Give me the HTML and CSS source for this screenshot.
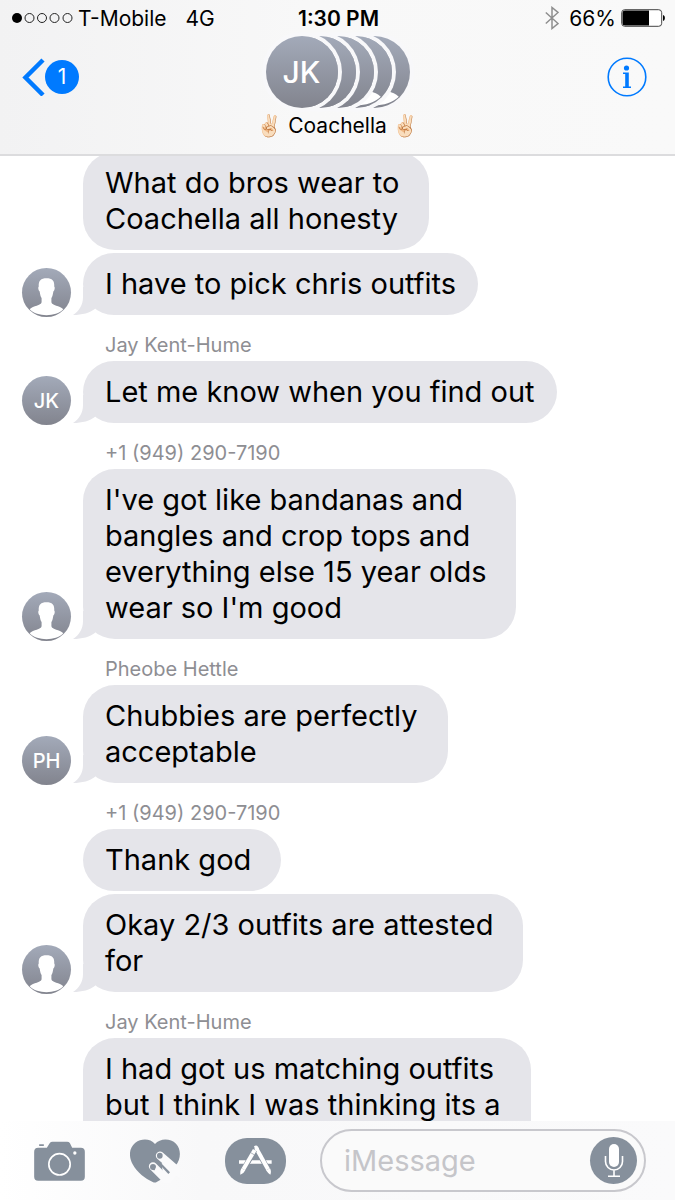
FILE: index.html
```html
<!DOCTYPE html>
<html lang="en">

<head>
    <meta charset="UTF-8">
    <meta name="viewport" content="width=device-width, initial-scale=1.0">
    <title>Coachella</title>
    <link rel="stylesheet" href="styles.css">
</head>

<body>
    <!-- shared contact silhouette -->
    <svg class="defs" aria-hidden="true">
        <symbol id="person" viewBox="0 0 48 48">
            <path fill="#fff" d="M24 10c5.500 0 8 2.500 7.600 8 1 1 .3 4-.9 5-.4 3-1 5-1.900 6.500v4c.7 3.500 8 3 11.700 7C36.500 44.500 30.500 46.200 24 46.200s-12.500-1.700-16.500-5.700c3.700-4 11-3.500 11.700-7v-4c-.9-1.500-1.500-3.500-1.900-6.500-1.200-1-1.900-4-.9-5C16 12.500 18.500 10 24 10z" />
        </symbol>
    </svg>

    <header class="header">
        <div class="status">
            <div class="status-left">
                <svg width="61" height="12" viewBox="0 0 61 12" aria-hidden="true">
                    <circle cx="5" cy="6" r="5" />
                    <g fill="none" stroke="#222">
                        <circle cx="17.500" cy="6" r="4.500" />
                        <circle cx="30" cy="6" r="4.500" />
                        <circle cx="42.500" cy="6" r="4.500" />
                        <circle cx="55.500" cy="6" r="4.500" />
                    </g>
                </svg>
                <span class="carrier">T-Mobile</span>
                <span>4G</span>
            </div>
            <div class="time">1:30 PM</div>
            <div class="status-right">
                <svg width="14" height="24" viewBox="0 0 14 24" fill="none" stroke="#8e8e8e" stroke-width="1.500" aria-hidden="true">
                    <path d="M.8 6.500L13 17.500 7 22.500V1.500L13 6.500.8 17.500" />
                </svg>
                <span>66%</span>
                <svg width="44" height="18" viewBox="0 0 44 18" aria-hidden="true">
                    <rect x=".7" y=".7" width="40" height="16.600" rx="3" fill="#fff" stroke="#444" />
                    <path d="M4 1.500h24v15H4a2.500 2.500 0 0 1-2.500-2.500V4A2.500 2.500 0 0 1 4 1.500z" />
                    <path d="M42 6c2.500.5 2.500 5.500 0 6z" />
                </svg>
            </div>
        </div>

        <nav class="nav">
            <a class="back" href="#" aria-label="Back">
                <svg width="24" height="38" viewBox="0 0 24 38" fill="none" stroke="#007aff" stroke-width="4.500" aria-hidden="true">
                    <path d="M22 2L4.500 19.500 22 37" />
                </svg>
                <span class="unread">1</span>
            </a>
            <div class="group">
                <div class="stack">
                    <span class="avatar big">JK</span>
                    <span class="avatar big"></span>
                    <span class="avatar big"></span>
                    <span class="avatar big"><svg><use href="#person" /></svg></span>
                    <span class="avatar big"><svg><use href="#person" /></svg></span>
                </div>
                <h1 class="title"><span class="emoji">✌🏻</span> Coachella <span class="emoji">✌🏻</span></h1>
            </div>
            <button class="info" aria-label="Info">
                <svg width="40" height="40" viewBox="0 0 40 40" aria-hidden="true">
                    <circle cx="20" cy="20" r="18.800" fill="none" stroke="#007aff" stroke-width="1.600" />
                    <circle cx="19.500" cy="11" r="2.600" fill="#007aff" />
                    <path fill="#007aff" d="M16 15.500h5.800v14h2.200V31h-8v-1.500h2.200V17H16z" />
                </svg>
            </button>
        </nav>
    </header>

    <main class="chat">
        <section class="messages">
            <div class="message">
                <p class="bubble">What do bros wear to<br>Coachella all honesty</p>
            </div>
            <div class="message">
                <span class="avatar"><svg><use href="#person" /></svg></span>
                <p class="bubble tail snug">I have to pick chris outfits</p>
            </div>

            <h2 class="sender">Jay Kent-Hume</h2>
            <div class="message">
                <span class="avatar">JK</span>
                <p class="bubble tail snug">Let me know when you find out</p>
            </div>

            <h2 class="sender">+1 (949) 290-7190</h2>
            <div class="message">
                <span class="avatar"><svg><use href="#person" /></svg></span>
                <p class="bubble tail">I've got like bandanas and<br>bangles and crop tops and<br>everything else 15 year olds<br>wear so I'm good</p>
            </div>

            <h2 class="sender">Pheobe Hettle</h2>
            <div class="message">
                <span class="avatar">PH</span>
                <p class="bubble tail">Chubbies are perfectly<br>acceptable</p>
            </div>

            <h2 class="sender">+1 (949) 290-7190</h2>
            <div class="message">
                <p class="bubble">Thank god</p>
            </div>
            <div class="message">
                <span class="avatar"><svg><use href="#person" /></svg></span>
                <p class="bubble tail">Okay 2/3 outfits are attested<br>for</p>
            </div>

            <h2 class="sender">Jay Kent-Hume</h2>
            <div class="message">
                <p class="bubble continues">I had got us matching outfits<br>but I think I was thinking its a</p>
            </div>
        </section>
    </main>

    <footer class="toolbar">
        <button aria-label="Camera">
            <svg width="51" height="40" viewBox="102 90 152 120">
                <path fill="#86909c" d="M117 100h14v5h-14zM114 110h26l9-14q3-4 8-4h44q5 0 8 4l7 14h26q12 0 12 12v75q0 12-12 12H114q-12 0-12-12v-75q0-12 12-12z" />
                <circle cx="178" cy="160" r="32" fill="none" stroke="#fff" stroke-width="5" />
                <circle cx="224" cy="126" r="5" fill="#fff" />
            </svg>
        </button>
        <button aria-label="Digital Touch">
            <svg width="50" height="44" viewBox="390 88 150 132">
                <path fill="#86909c" d="M465 103C451 86 424 86 406 99c-20 16-20 44-8 65 13 25 38 43 60 53q7 3 12 0 35-17 58-50c14-18 17-47 0-65-17-17-48-17-63 1z" />
                <g fill="none" stroke="#fafafb" stroke-linecap="round">
                    <path stroke-width="25" d="M480 138l60 52" />
                    <path stroke-width="25" d="M459 170l42 42" />
                </g>
                <path fill="#fafafb" d="M485 160l45 5 10 20-30 35-20-15z" />
                <g fill="#86909c">
                    <path d="M471 138a8 8 0 1 1 17 0q0 9-9 9-8 0-8-9zM450 172a9 9 0 1 1 18 0l-4 10q-14 0-14-10z" />
                    <path d="M478 164l5-4 27 28-5 5z" />
                </g>
            </svg>
        </button>
        <button aria-label="Apps">
            <svg width="61" height="46" viewBox="675 83 183 138">
                <rect x="675" y="83" width="183" height="138" rx="66" fill="#86909c" />
                <g stroke="#fff" fill="none" stroke-width="12">
                    <path stroke-width="10" d="M717 155h98" />
                    <path stroke="#86909c" stroke-width="16" d="M766 114l-36 65M768 112l37 68" />
                    <path d="M768 112l36 65" />
                    <path stroke="#86909c" stroke-width="15" d="M764 119l-20 36" />
                    <path d="M764 119l-34 58" />
                </g>
                <path fill="#fff" d="M762 108q7-5 12 1l3 6-10 6zM724 174l12 6q-4 9-15 13-1-11 3-19zM798 180l12-6q5 9 1 19-8-5-13-13z" />
                <path stroke="#86909c" stroke-width="2" d="M752 127l12 7" />
            </svg>
        </button>
        <div class="compose">
            <input type="text" placeholder="iMessage" aria-label="iMessage">
            <button class="mic" aria-label="Dictate">
                <svg width="20" height="36" viewBox="0 0 20 36" fill="none" stroke="#fff" stroke-width="1.600">
                    <rect x="5" y="1" width="10" height="23" rx="5" fill="#fff" stroke="none" />
                    <path d="M1.500 13v5.500a8.500 8.500 0 0 0 17 0V13M10 27v6M4 33.200h12" />
                </svg>
            </button>
        </div>
    </footer>
</body>

</html>
```

FILE: styles.css
```css
* {
    box-sizing: border-box;
}

body {
    margin: 0;
    height: 100vh;
    display: flex;
    flex-direction: column;
    background: #fff;
    color: #000;
    font-family: Inter, "Liberation Sans", sans-serif;
}

button {
    display: flex;
    flex: none;
    padding: 0;
    border: none;
    background: none;
    cursor: pointer;
}

.defs {
    position: absolute;
    width: 0;
    height: 0;
}

/* header */
.header {
    flex: none;
    background: linear-gradient(to right, #f2f2f3, #f8f8f8 45%, #f9f9f9);
    border-bottom: 2px solid #dcdcde;
}

.status {
    display: grid;
    grid-template-columns: 1fr auto 1fr;
    align-items: center;
    height: 36px;
    padding: 0 10px 0 12px;
    font-size: 21px;
}

.status-left,
.status-right {
    display: flex;
    align-items: center;
    gap: 5px;
}

.status-right {
    justify-content: flex-end;
}

.status-right svg:first-child {
    margin-right: 5px;
}

.carrier {
    margin-right: 14px;
}

.time {
    font-weight: 600;
}

.nav {
    display: grid;
    grid-template-columns: 1fr auto 1fr;
    height: 118px;
    padding: 0 21px;
}

.back {
    display: flex;
    align-items: center;
    justify-self: start;
    height: 38px;
    margin-top: 22px;
    text-decoration: none;
}

.unread {
    width: 34px;
    height: 34px;
    border-radius: 50%;
    background: #007aff;
    color: #fff;
    font-size: 21px;
    line-height: 34px;
    text-align: center;
}

.info {
    justify-self: end;
    align-self: start;
    margin-top: 21px;
    margin-right: 7px;
}

.group {
    display: flex;
    flex-direction: column;
    align-items: center;
}

.stack {
    display: flex;
    isolation: isolate;
}

.title {
    margin: 4px 0 0;
    font-size: 21px;
    font-weight: 400;
    line-height: 28px;
}

.emoji {
    font-family: "Noto Color Emoji", sans-serif;
}

/* avatars */
.avatar {
    display: flex;
    flex: none;
    align-items: center;
    justify-content: center;
    width: 49px;
    height: 49px;
    border-radius: 50%;
    background: linear-gradient(#a3aab9, #82848e);
    color: #fff;
    font-size: 20px;
    font-weight: 500;
}

.avatar svg {
    width: 100%;
    height: 100%;
}

.big {
    position: relative;
    width: 72px;
    height: 72px;
    box-shadow: 0 0 0 4px #f8f8fa;
    font-size: 30px;
}

.big + .big {
    margin-left: -54px;
}

.big:nth-child(1) {
    z-index: 5;
}

.big:nth-child(2) {
    z-index: 4;
}

.big:nth-child(3) {
    z-index: 3;
}

.big:nth-child(4) {
    z-index: 2;
}

.big:nth-child(5) {
    z-index: 1;
}

/* conversation */
.chat {
    flex: 1;
    min-height: 0;
    overflow: hidden;
}

.messages {
    display: flex;
    flex-direction: column;
    gap: 3px;
    margin-top: -4px;
    padding: 0 22px;
}

.message {
    display: grid;
    grid-template-columns: 49px 1fr;
    column-gap: 12px;
    align-items: end;
}

.message .avatar {
    margin-bottom: -2px;
}

.bubble {
    position: relative;
    isolation: isolate;
    grid-column: 2;
    justify-self: start;
    margin: 0;
    padding: 13px 30px 13px 22px;
    border-radius: 32px;
    background: #e5e5ea;
    font-size: 29px;
    line-height: 36px;
}

.snug {
    padding-right: 22px;
}

/* last bubble runs on under the toolbar */
.continues {
    padding-bottom: 49px;
}

.tail::before {
    content: "";
    position: absolute;
    z-index: -1;
    left: -10px;
    bottom: 0;
    width: 34px;
    height: 28px;
    background: #e5e5ea;
    clip-path: path("M10 0V10C10 18 6 24 0 28C9 28 17 26 23 21L34 10V0Z");
}

.sender {
    margin: 0;
    padding: 15px 0 1px 83px;
    color: #8e8e93;
    font-size: 20px;
    font-weight: 400;
    line-height: 24px;
}

/* toolbar */
.toolbar {
    display: flex;
    flex: none;
    align-items: center;
    gap: 45px;
    height: 79px;
    padding: 0 29px 0 34px;
    background: linear-gradient(to right, #fff, #f8f8f9 30%, #fafafb);
}

.compose {
    display: flex;
    flex: 1;
    align-items: center;
    min-width: 0;
    height: 63px;
    margin-left: -11px;
    padding: 0 7px 0 22px;
    border: 2px solid #c8c8cd;
    border-radius: 32px;
    background: #fafafa;
}

.compose input {
    flex: 1;
    min-width: 0;
    padding: 0;
    border: none;
    outline: none;
    background: none;
    font: inherit;
    font-size: 29px;
}

.compose input::placeholder {
    color: #c5c5c9;
    opacity: 1;
}

.mic {
    align-items: center;
    justify-content: center;
    width: 47px;
    height: 47px;
    border-radius: 50%;
    background: #86909c;
}
```
